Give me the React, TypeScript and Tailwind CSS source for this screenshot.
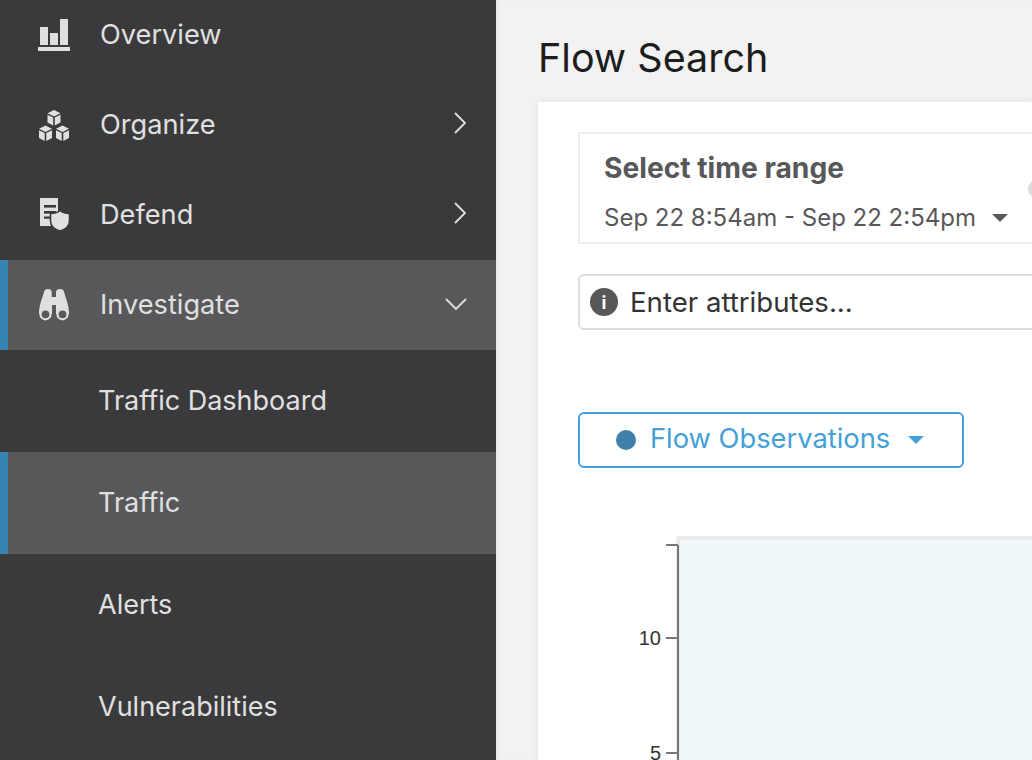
const sans = { fontFamily: "Inter, 'Liberation Sans', sans-serif" };

const OverviewIcon = () => (
  <svg width="32" height="32" viewBox="0 0 32 32" fill="#e0e0e0">
    <rect x="2" y="8" width="8" height="18" />
    <rect x="12" y="14" width="8" height="12" />
    <rect x="22" y="0" width="8" height="26" />
    <rect x="0" y="28" width="32" height="4" />
  </svg>
);

const Cube = ({ x, y }: { x: number; y: number }) => (
  <g transform={`translate(${x} ${y})`}>
    <path d="M6.500 0L13 3.200L6.500 6.400L0 3.200Z" />
    <path d="M0 4.800L5.700 7.600V15.500L0 12.600Z" />
    <path d="M13 4.800L7.300 7.600V15.500L13 12.600Z" />
  </g>
);

const OrganizeIcon = () => (
  <svg width="32" height="32" viewBox="0 0 32 32" fill="#e0e0e0">
    <Cube x={9.5} y={1} />
    <Cube x={1} y={16.5} />
    <Cube x={18} y={16.5} />
  </svg>
);

const DefendIcon = () => (
  <svg width="32" height="34" viewBox="0 0 32 34">
    <path d="M2 0H20V28H2Z" fill="#e0e0e0" />
    <rect x="6" y="7" width="12" height="2.600" fill="#3a3a3c" />
    <rect x="6" y="13" width="12" height="2.600" fill="#3a3a3c" />
    <rect x="6" y="18.500" width="6" height="2.200" fill="#3a3a3c" />
    <path
      d="M22 12.500C19 15 16.500 15.500 12.500 15.500V23C12.500 28 17 31.500 22 33C27 31.500 31.500 28 31.500 23V15.500C27.500 15.500 25 15 22 12.500Z"
      fill="#e0e0e0"
      stroke="#3a3a3c"
      strokeWidth="1.6"
    />
  </svg>
);

const InvestigateIcon = () => (
  <svg width="32" height="32" viewBox="0 0 32 32">
    <path
      d="M6 3C6 1 8 0 10 0C12 0 13.700 1 13.700 3V8H18V3C18 1 20 0 22 0C24 0 26 1 26 3C28 10 31 16 31 25H18V16H14V25H1C1 16 4 10 6 3Z"
      fill="#e0e0e0"
    />
    <circle cx="7.500" cy="25.300" r="5" fill="#58585a" stroke="#e0e0e0" strokeWidth="2.200" />
    <circle cx="24.500" cy="25.300" r="5" fill="#58585a" stroke="#e0e0e0" strokeWidth="2.200" />
  </svg>
);

const ChevronRight = () => (
  <svg width="14" height="22" viewBox="0 0 14 22" fill="none" stroke="#e0e0e0" strokeWidth="1.8">
    <path d="M2 1L12 11L2 21" />
  </svg>
);

const ChevronDown = () => (
  <svg width="24" height="14" viewBox="0 0 24 14" fill="none" stroke="#e0e0e0" strokeWidth="1.8">
    <path d="M2 2L12 12L22 2" />
  </svg>
);

const Caret = ({ color }: { color: string }) => (
  <svg width="16" height="8" viewBox="0 0 16 8" fill={color}>
    <path d="M0 0H16L8 8Z" />
  </svg>
);

const NavItem = ({ icon, label, chevron }: { icon: React.ReactNode; label: string; chevron?: boolean }) => (
  <div className="flex h-[90px] items-center pl-[38px] pr-[29px] text-[27.2px] text-[#e0e0e0]">
    <div className="w-[62px] shrink-0">{icon}</div>
    <span>{label}</span>
    {chevron && (
      <div className="ml-auto mb-[4px]">
        <ChevronRight />
      </div>
    )}
  </div>
);

const SubItem = ({ label, active }: { label: string; active?: boolean }) => (
  <div
    className={`flex h-[102px] items-center text-[27px] text-[#e0e0e0] ${
      active ? "border-l-[8px] border-[#3783b3] bg-[#58585a] pl-[90px]" : "pl-[98px]"
    }`}
  >
    {label}
  </div>
);

const Sidebar = () => (
  <div className="-mt-[10px] w-[496px] shrink-0 bg-[#3a3a3c]">
    <NavItem icon={<OverviewIcon />} label="Overview" />
    <NavItem icon={<OrganizeIcon />} label="Organize" chevron />
    <NavItem icon={<DefendIcon />} label="Defend" chevron />
    <div className="flex h-[90px] items-center border-l-[8px] border-[#3783b3] bg-[#58585a] pl-[30px] pr-[28px] text-[27.2px] text-[#e0e0e0]">
      <div className="w-[62px] shrink-0">
        <InvestigateIcon />
      </div>
      <span>Investigate</span>
      <div className="ml-auto mb-[2px]">
        <ChevronDown />
      </div>
    </div>
    <SubItem label="Traffic Dashboard" />
    <SubItem label="Traffic" active />
    <SubItem label="Alerts" />
    <SubItem label="Vulnerabilities" />
  </div>
);

const Chart = () => (
  <div className="mt-[68px] flex">
    <svg width="102" height="300" className="relative z-10 shrink-0" fontFamily="'Liberation Sans', sans-serif">
      <path d="M100 9V300M88 9H100M88 102H100M88 217H100" fill="none" stroke="#777777" strokeWidth="2" />
      <text x="83" y="109" textAnchor="end" fontSize="20" fill="#333333">10</text>
      <text x="83" y="224" textAnchor="end" fontSize="20" fill="#333333">5</text>
    </svg>
    <div className="-ml-[4px] h-[300px] flex-1 rounded-tl-[4px] border-l-[4px] border-t-[4px] border-[#e8ecef] bg-[#eff7fb]" />
  </div>
);

const Main = () => (
  <div className="flex min-w-0 flex-1 flex-col bg-[#f2f2f2] pl-[42px] shadow-[inset_4px_0_6px_-4px_rgba(0,0,0,0.1)]">
    <h1 className="flex h-[102px] items-center pt-[16px] text-[39.5px] text-[#1c1c1c]">Flow Search</h1>
    <div className="flex-1 overflow-hidden bg-white pl-[40px] pt-[30px] shadow-[0_0_8px_rgba(0,0,0,0.08)]">
      <div className="relative h-[112px] w-[600px] rounded-[3px] border-2 border-[#e9eef2] pl-[24px]">
        <div className="pt-[18px] text-[28.2px] font-bold leading-[32px] text-[#58585a]">Select time range</div>
        <div className="mt-[20px] flex items-center gap-[16px] text-[24px] leading-[28px] text-[#58585a]">
          <span>Sep 22 8:54am - Sep 22 2:54pm</span>
          <Caret color="#58585a" />
        </div>
        <div className="absolute left-[448px] top-[46px] h-[18px] w-[18px] rounded-full bg-[#dcdcdc]" />
      </div>
      <div className="mt-[30px] flex h-[56px] w-[600px] items-center gap-[12px] rounded-[6px] border-2 border-[#dddddd] pl-[10px] text-[27.6px] text-[#333333]">
        <div className="flex h-[28px] w-[28px] items-center justify-center rounded-full bg-[#58585a] text-[18px] font-bold text-white">
          i
        </div>
        <span className="mt-[1px]">Enter attributes...</span>
      </div>
      <div className="mt-[82px] flex h-[56px] w-[386px] items-center rounded-[6px] border-2 border-[#44a0d6] pl-[36px] text-[27.3px] text-[#44a0d6]">
        <div className="mr-[14px] h-[20px] w-[20px] rounded-full bg-[#3f80a8]" />
        <span className="-mt-[2px]">Flow Observations</span>
        <div className="ml-[18px]">
          <Caret color="#44a0d6" />
        </div>
      </div>
      <Chart />
    </div>
  </div>
);

export default function App() {
  return (
    <div className="flex h-[760px] w-[1032px] overflow-hidden" style={sans}>
      <Sidebar />
      <Main />
    </div>
  );
}
